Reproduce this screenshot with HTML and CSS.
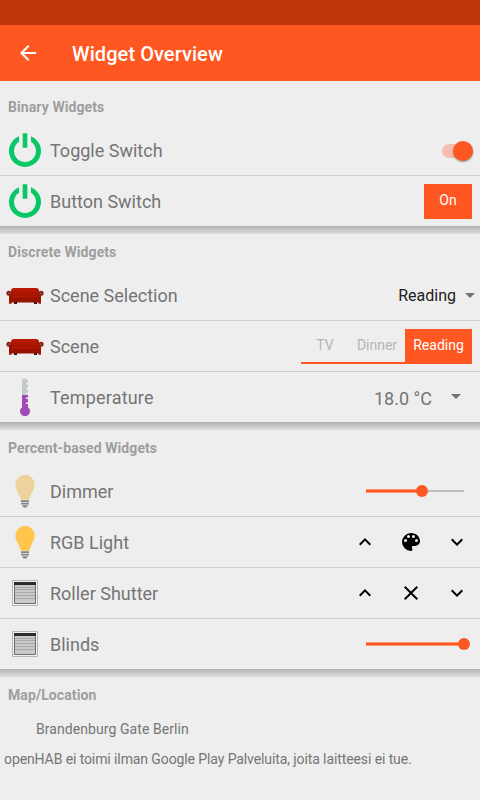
FILE: index.html
```html
<!DOCTYPE html>
<html lang="fi">
<head>
<meta charset="utf-8">
<title>Widget Overview</title>
<link rel="stylesheet" href="styles.css">
</head>
<body>
<svg class="defs" aria-hidden="true">
  <defs>
    <linearGradient id="sofa-red" x1="0" y1="0" x2="0" y2="1">
      <stop offset="0" stop-color="#b91a05"/><stop offset=".5" stop-color="#a61400"/><stop offset="1" stop-color="#8e1000"/>
    </linearGradient>
    <symbol id="power" viewBox="0 0 36 36">
      <path d="M12 3.2A16 16 0 1 0 24 3.2V8.8A11 11 0 1 1 12 8.800z" fill="#08c766"/>
      <path d="M15.7 0.200h4.600v14.600h-4.600z" fill="#08c766"/>
    </symbol>
    <symbol id="sofa" viewBox="0 0 38 18">
      <path d="M8 15h3v2H8zM28 15h3v2h-3z" fill="#2a1712"/>
      <path d="M5 4Q5 1 8 1H30Q33 1 33 4V15.600H5z" fill="url(#sofa-red)"/>
      <path d="M3 6H5.500V16.800H3zM32.500 6H35V16.800H32.500z" fill="#9e1200"/>
      <path d="M5.500 9.700H32.500" stroke="#bd1c08" stroke-width=".8"/>
      <circle cx="2.900" cy="6.200" r="2.500" fill="#8f1508"/><circle cx="35.100" cy="6.200" r="2.500" fill="#8f1508"/>
      <circle cx="3.200" cy="6.200" r="1.300" fill="#725244"/><circle cx="34.800" cy="6.200" r="1.300" fill="#725244"/>
    </symbol>
    <symbol id="thermo" viewBox="0 0 12 38">
      <path d="M3 18V3.500a3 3 0 0 1 6 0V5H7v1.400h2v3.400H7v1.400h2V15H7v1.400h2V18z" fill="#c3cacd"/>
      <path d="M3 17H9v2.600H7V21h2v3.600H7V26h2v3.200a5 5 0 1 1-6 0z" fill="#a349b8"/>
    </symbol>
    <symbol id="bulb" viewBox="0 0 20 34">
      <path d="M10 0.800A9.700 9.700 0 0 0 .4 10.500C.4 15 3.400 18.500 4.800 22.500Q5.500 25.600 6.600 25.800H13.400Q14.500 25.600 15.200 22.500C16.600 18.500 19.600 15 19.600 10.500A9.700 9.700 0 0 0 10 .8z" fill="currentColor"/>
      <path d="M6 26.300h8v2H6zM6 29h8v1.600H6zM7 31.200h6L11.400 33.400H8.600z" fill="#858585"/>
    </symbol>
    <symbol id="shutter" viewBox="0 0 26 26">
      <path d="M.5.5h25v25H.5z" fill="#f2f2f2" stroke="#b5b5b5"/>
      <path d="M2.500 2.500h21v21h-21z" fill="#c9c8ca" stroke="#6d6d6d"/>
      <path d="M2 2h22v3H2z" fill="#2b2b2d"/>
      <path d="M3 7.500h20M3 9.500h20M3 12.500h20M3 15.500h20M3 18.500h20" stroke="#a9a9a9"/>
    </symbol>
    <symbol id="up" viewBox="0 0 24 24"><path d="M7.400 15.400 12 10.800l4.600 4.600L18 14l-6-6-6 6z"/></symbol>
    <symbol id="down" viewBox="0 0 24 24"><path d="M7.400 8.600 12 13.200l4.600-4.600L18 10l-6 6-6-6z"/></symbol>
    <symbol id="close" viewBox="0 0 24 24"><path d="M19 6.400 17.600 5 12 10.600 6.400 5 5 6.400 10.600 12 5 17.600 6.400 19 12 13.400 17.600 19 19 17.600 13.400 12z"/></symbol>
    <symbol id="palette" viewBox="0 0 24 24"><path d="M12 3a9 9 0 0 0 0 18c.83 0 1.500-.67 1.500-1.500 0-.39-.15-.74-.39-1.010-.23-.26-.38-.61-.38-.99 0-.83.67-1.500 1.500-1.500H16a5 5 0 0 0 5-5c0-4.420-4.030-8-9-8zM6.500 12a1.500 1.500 0 1 1 0-3 1.500 1.500 0 0 1 0 3zm3-4a1.500 1.500 0 1 1 0-3 1.500 1.500 0 0 1 0 3zm5 0a1.500 1.500 0 1 1 0-3 1.500 1.500 0 0 1 0 3zm3 4a1.500 1.500 0 1 1 0-3 1.500 1.500 0 0 1 0 3z"/></symbol>
  </defs>
</svg>
<div class="status-bar"></div>
<header class="toolbar">
  <svg class="back" viewBox="0 0 24 24"><path d="M20 11H7.830l5.590-5.590L12 4l-8 8 8 8 1.410-1.410L7.830 13H20z"/></svg>
  <h1 class="title">Widget Overview</h1>
</header>
<main class="content">
  <section class="group">
    <h2 class="group-title">Binary Widgets</h2>
    <div class="row">
      <span class="icon"><svg class="power"><use href="#power"/></svg></span>
      <span class="label">Toggle Switch</span>
      <span class="switch"><span class="thumb"></span></span>
    </div>
    <div class="row">
      <span class="icon"><svg class="power"><use href="#power"/></svg></span>
      <span class="label">Button Switch</span>
      <button class="button">On</button>
    </div>
  </section>
  <section class="group">
    <h2 class="group-title">Discrete Widgets</h2>
    <div class="row row-spinner">
      <span class="icon"><svg class="sofa"><use href="#sofa"/></svg></span>
      <span class="label">Scene Selection</span>
      <span class="selection">Reading</span>
      <svg class="caret" viewBox="0 0 10 5"><path d="M0 0H10L5 5z"/></svg>
    </div>
    <div class="row">
      <span class="icon"><svg class="sofa"><use href="#sofa"/></svg></span>
      <span class="label">Scene</span>
      <div class="segments">
        <span class="segment segment-tv">TV</span>
        <span class="segment segment-dinner">Dinner</span>
        <span class="segment active">Reading</span>
      </div>
    </div>
    <div class="row row-temperature">
      <span class="icon"><svg class="thermo"><use href="#thermo"/></svg></span>
      <span class="label">Temperature</span>
      <span class="value">18.0 °C</span>
      <svg class="caret" viewBox="0 0 10 5"><path d="M0 0H10L5 5z"/></svg>
    </div>
  </section>
  <section class="group">
    <h2 class="group-title">Percent-based Widgets</h2>
    <div class="row">
      <span class="icon"><svg class="bulb dim"><use href="#bulb"/></svg></span>
      <span class="label">Dimmer</span>
      <span class="slider"><span class="fill" style="width: 56px"></span><span class="knob"></span><span class="rest"></span></span>
    </div>
    <div class="row">
      <span class="icon"><svg class="bulb"><use href="#bulb"/></svg></span>
      <span class="label">RGB Light</span>
      <span class="actions"><svg><use href="#up"/></svg><svg><use href="#palette"/></svg><svg><use href="#down"/></svg></span>
    </div>
    <div class="row">
      <span class="icon"><svg class="shutter"><use href="#shutter"/></svg></span>
      <span class="label">Roller Shutter</span>
      <span class="actions"><svg><use href="#up"/></svg><svg><use href="#close"/></svg><svg><use href="#down"/></svg></span>
    </div>
    <div class="row">
      <span class="icon"><svg class="shutter"><use href="#shutter"/></svg></span>
      <span class="label">Blinds</span>
      <span class="slider"><span class="fill" style="width: 98px"></span><span class="knob"></span><span class="rest"></span></span>
    </div>
  </section>
  <section class="group location">
    <h2 class="group-title">Map/Location</h2>
    <p class="place">Brandenburg Gate Berlin</p>
    <p class="notice">openHAB ei toimi ilman Google Play Palveluita, joita laitteesi ei tue.</p>
  </section>
</main>
</body>
</html>
```
FILE: styles.css
```css
* { box-sizing: border-box; }
html, body { margin: 0; height: 100%; overflow: hidden; }
body { background: #eee; font-family: Roboto, sans-serif; color: #757575; }
h1, h2, p { margin: 0; }
svg { display: block; }
.defs { position: absolute; width: 0; height: 0; }

.status-bar { height: 25px; background: #bf360c; }
.toolbar { height: 56px; display: flex; align-items: center; padding-left: 16px; background: #ff5722; color: #fff; }
.back { width: 24px; height: 24px; fill: #fff; margin-right: 32px; }
.title { font-size: 20px; font-weight: 500; line-height: 24px; padding-top: 2px; letter-spacing: .07px; }

.content { padding-top: 8px; }
.group-title { height: 36px; padding: 10px 8px 0; font-size: 14px; line-height: 16px; font-weight: 700; letter-spacing: .09px; color: #9e9e9e; }
.group:not(.location)::after { content: ""; display: block; height: 8px; background: linear-gradient(#b2b2b0, #dededc); }

.row { height: 50px; display: flex; align-items: center; padding-right: 8px; }
.row + .row { height: 51px; border-top: 1px solid #d0d0d0; }
.icon { width: 50px; display: flex; justify-content: center; flex: none; }
.label { flex: 1; font-size: 18px; line-height: 22px; padding-top: 2px; }
.power { width: 36px; height: 36px; margin-top: 2px; }
.sofa { width: 38px; height: 18px; margin-top: 2px; }
.thermo { width: 12px; height: 38px; }
.bulb { width: 20px; height: 34px; color: #ffc64b; }
.dim { color: #edd39b; }
.shutter { width: 26px; height: 26px; }

.switch { width: 30.5px; height: 14px; border-radius: 7px; background: #f5bdae; display: flex; align-items: center; justify-content: flex-end; margin-right: -.5px; margin-top: 1px; }
.thumb { width: 20px; height: 20px; flex: none; border-radius: 50%; background: #ff5722; box-shadow: 0 1px 2px rgba(0, 0, 0, .4); }
.button { width: 48px; height: 35px; border: 0; padding: 0 0 3px; background: #ff5722; color: #fff; font: 14px/16px Roboto, sans-serif; }

.row-spinner { padding-right: 5px; }
.selection { color: #212121; font-size: 16px; line-height: 20px; margin-right: 9px; padding-top: 2px; }
.caret { width: 10px; height: 5px; fill: #737373; }
.row-temperature .caret { margin-bottom: 1px; }
.row-temperature .label { letter-spacing: .18px; }
.row-temperature { padding-right: 19px; }
.value { font-size: 18px; line-height: 22px; padding-top: 3px; margin-right: 19px; }

.segments { display: flex; height: 35px; border-bottom: 2px solid #ff5722; color: #b5b5b5; font-size: 14px; line-height: 33px; }
.segment { text-align: center; height: 33px; }
.segment-tv { width: 48px; }
.segment-dinner { width: 56px; }
.active { width: 67px; background: #ff5722; color: #fff; }

.slider { width: 98px; height: 12px; margin-right: 8px; display: flex; align-items: center; }
.fill { height: 4px; flex: none; background: linear-gradient(#ff9576 1px, #ff5722 1px, #ff5722 3px, #ff9576 3px); }
.knob { width: 12px; height: 12px; flex: none; margin: 0 -6px; border-radius: 50%; background: #ff5722; z-index: 1; }
.rest { flex: 1; height: 2px; background: #bdbdbd; }

.actions { display: flex; gap: 22px; margin-right: 3px; }
.actions svg { width: 24px; height: 24px; fill: #000; }

.place { padding: 8px 0 0 36px; font-size: 14px; line-height: 16px; letter-spacing: .07px; }
.notice { padding: 14px 0 0 4px; font-size: 14px; line-height: 16px; letter-spacing: -.1px; white-space: nowrap; }
```
